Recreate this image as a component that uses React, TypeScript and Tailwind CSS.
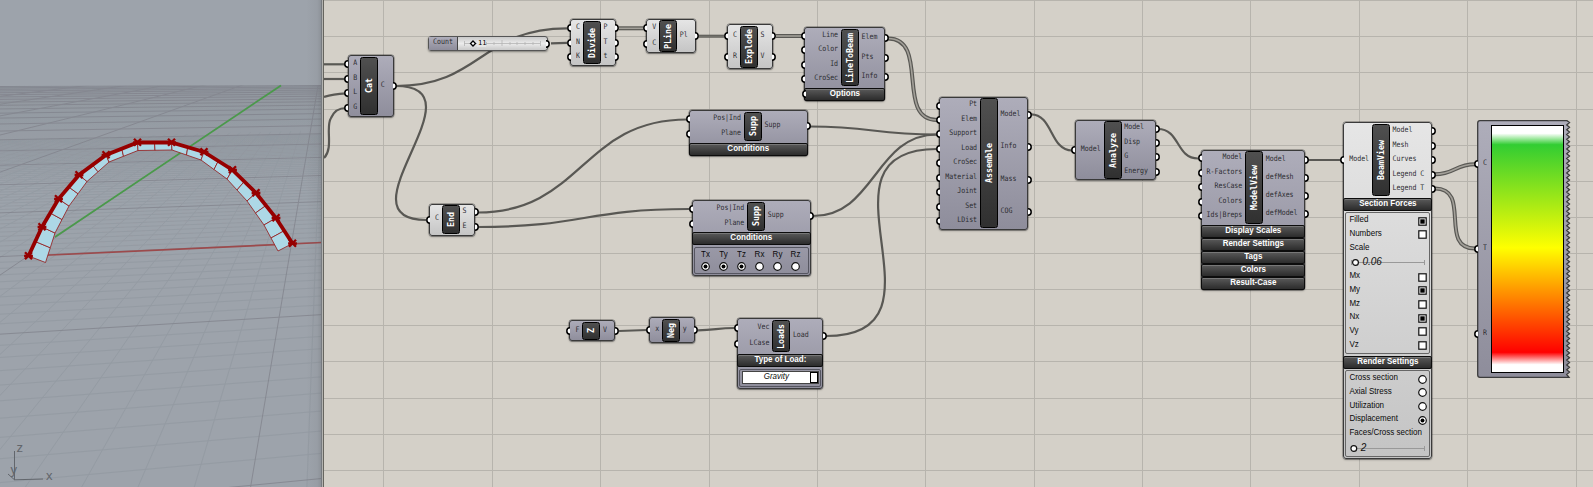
import React from "react";

const ORIGIN = 324;

type Tone = "gray" | "purple";

const toneClass: Record<Tone, string> = {
  gray: "bg-linear-to-b from-[#e6e6e6] to-[#c4c4c4]",
  purple: "bg-linear-to-b from-[#aeadba] to-[#8e8d9b]",
};

function Port({ side }: { side: "left" | "right" }) {
  return side === "left" ? (
    <svg width="4" height="9" viewBox="0 0 4 9" className="absolute top-1/2 -left-[3.4px] -translate-y-1/2">
      <path d="M4,1.3A3.1,3.1 0 0 0 4,7.7" fill="#fff" stroke="#000" strokeWidth="1.5" />
    </svg>
  ) : (
    <svg width="4" height="9" viewBox="0 0 4 9" className="absolute top-1/2 -right-[3.4px] -translate-y-1/2">
      <path d="M0,1.3A3.1,3.1 0 0 1 0,7.7" fill="#fff" stroke="#000" strokeWidth="1.5" />
    </svg>
  );
}

interface NodeProps {
  name: string;
  x: number;
  y: number;
  w: number;
  body: number;
  left: number;
  inputs: string[];
  outputs: string[];
  tone?: Tone;
  children?: React.ReactNode;
}

function Node({ name, x, y, w, body, left, inputs, outputs, tone = "purple", children }: NodeProps) {
  return (
    <div
      className={`absolute rounded-[3px] shadow-[0_0_0_0.4px_rgba(0,0,0,0.5),0_1px_2px_rgba(0,0,0,0.3)] outline-[1px] -outline-offset-1 outline-[#3a3a3a] ${toneClass[tone]}`}
      style={{ left: x - ORIGIN, top: y, width: w }}
    >
      <div className="flex" style={{ height: body }}>
        <div className="relative flex flex-col py-[1.5px]" style={{ width: left }}>
          {inputs.map((t) => (
            <div key={t} className="relative flex flex-1 items-center justify-end pr-[3px]">
              <Port side="left" />
              <Label>{t}</Label>
            </div>
          ))}
        </div>
        <div className="my-[1.5px] flex w-[18px] items-center justify-center rounded-[2.5px] border border-black bg-linear-to-b from-[#505050] to-[#303030]">
          <span className="scale-x-[1.15] rotate-180 whitespace-nowrap font-['DejaVu_Sans_Mono',monospace] text-[8.3px] leading-none font-bold text-white [writing-mode:vertical-rl]">
            {name}
          </span>
        </div>
        <div className="flex flex-1 flex-col py-[1.5px]">
          {outputs.map((t) => (
            <div key={t} className="relative flex flex-1 items-center pl-[2.5px]">
              <Port side="right" />
              <Label>{t}</Label>
            </div>
          ))}
        </div>
      </div>
      {children}
    </div>
  );
}

function Label({ children }: { children: React.ReactNode }) {
  return (
    <span className="mb-[1.5px] scale-y-[1.15] whitespace-pre font-['DejaVu_Sans_Mono',monospace] text-[6.6px] leading-none text-[#2c2c30]">
      {children}
    </span>
  );
}

function Bar({ children, port }: { children: React.ReactNode; port?: boolean }) {
  return (
    <div className="relative flex h-[13px] items-center justify-center rounded-[2px] border border-[#0c0c0c] bg-linear-to-b from-[#5a5a5a] to-[#2c2c2c] shadow-[inset_0_1px_0_#777]">
      {port && <Port side="left" />}
      <span className="mb-[1px] scale-y-[1.08] font-['Liberation_Sans',Arial,sans-serif] text-[8px] leading-none font-bold whitespace-nowrap text-white">
        {children}
      </span>
    </div>
  );
}

function Radio({ on }: { on?: boolean }) {
  return (
    <svg width="9" height="9" viewBox="0 0 9 9" className="shrink-0">
      <circle cx="4.5" cy="4.5" r="3.8" fill="#fff" stroke="#111" strokeWidth="1.2" />
      {on && <circle cx="4.5" cy="4.5" r="2" fill="#000" />}
    </svg>
  );
}

function Check({ on }: { on?: boolean }) {
  return (
    <svg width="9" height="9" viewBox="0 0 9 9" className="shrink-0">
      <rect x="0.8" y="0.8" width="7.4" height="7.4" fill="#fff" stroke="#111" strokeWidth="1.2" />
      {on && <rect x="2.3" y="2.3" width="4.4" height="4.4" fill="#000" />}
    </svg>
  );
}

function Option({ label, children }: { label: string; children?: React.ReactNode }) {
  return (
    <div className="flex h-[13.7px] items-center justify-between">
      <span className="scale-y-110 font-['Liberation_Sans',Arial,sans-serif] text-[8px] leading-none whitespace-nowrap text-[#0a0a0a]">{label}</span>
      <span className="mt-[2px] flex">{children}</span>
    </div>
  );
}

function ValueSlider({ value, knob }: { value: string; knob: number }) {
  return (
    <div className="relative h-[15px]">
      <svg width="80" height="15" viewBox="0 0 80 15" className="absolute top-0 left-0">
        <path d="M2,8.5H75M2.5,6V11M75.5,6V11" fill="none" stroke="#999" strokeWidth="1" />
        <circle cx={knob} cy="8.5" r="2.9" fill="#fff" stroke="#111" strokeWidth="1.2" />
      </svg>
      <span
        className="absolute top-[3px] font-['Liberation_Sans',Arial,sans-serif] text-[10px] leading-none text-[#111] italic"
        style={{ left: knob + 6.5 }}
      >
        {value}
      </span>
    </div>
  );
}

type WireKind = "single" | "double" | "tight";

function Wire({ d, kind = "single" }: { d: string; kind?: WireKind }) {
  if (kind === "single") return <path d={d} fill="none" stroke="#595854" strokeWidth="2.2" />;
  return (
    <g fill="none">
      <path d={d} stroke="#595854" strokeWidth={kind === "double" ? 4 : 3} />
      <path d={d} stroke="#a3a099" strokeWidth={kind === "double" ? 1.6 : 0.5} />
    </g>
  );
}

const wires: [string, WireKind?][] = [
  ["M324,64.3H346"],
  ["M324,79H346"],
  ["M324,97Q333,94 346,93.3"],
  ["M324,158C334,148 325,127 331,118C334,111 340,108 346,108"],
  ["M396,86C481,86 481,28.3 567,28.3"],
  ["M396,86C486,86 336,220 426,220"],
  ["M551,43.3L567,42.8"],
  ["M478,212.5C582,212.5 582,119.5 687,119.5"],
  ["M478,227C584,227 584,209 689,209"],
  ["M619,28.3H643", "double"],
  ["M699,36.2H724", "tight"],
  ["M776,36H802", "double"],
  ["M888,38.5C930,38.5 895,120 937,120", "double"],
  ["M810,126.5C873,126.5 873,134.5 937,134.5"],
  ["M813,216C875,216 875,134.5 937,134.5"],
  ["M826,336C961,336 802,149 937,149"],
  ["M1031,114.3C1053,114.3 1050,150.5 1072,150.5"],
  ["M1158,129C1180,129 1176,158.5 1198,158.5"],
  ["M1308,160H1341"],
  ["M1435,174.3C1455,174.3 1455,164.3 1475,164.3", "double"],
  ["M1435,188.5C1472,188.5 1438,248.5 1475,248.5", "double"],
  ["M619,331L647,330"],
  ["M698,330.3C716,330.3 716,328 735,328"],
];

const topChord = [
  [28.5, 256], [42, 227], [58.5, 199], [79, 175], [106, 155], [137.5, 142.5],
  [171.5, 142.5], [204, 152], [232.5, 170], [256, 193], [276, 218], [292.5, 243.5],
];
const bottomChord = [
  [45.5, 262.5], [55, 233], [69, 206], [87, 181.5], [109, 162], [138, 150.5],
  [172, 150], [201, 160], [227, 179], [247, 201], [264, 225], [278, 251],
];

function mid(a: number[], b: number[]) {
  return [(a[0] + b[0]) / 2, (a[1] + b[1]) / 2];
}

function GroundGrid() {
  const major: React.ReactNode[] = [];
  const minor: React.ReactNode[] = [];
  for (let i = -200; i <= 4; i++) {
    const x = 250.6 + 56.3 * i;
    if (i % 10 === 0) {
      if (i > -70) major.push(<line key={`v${i}`} x1="323" y1="56" x2={x} y2="487" />);
    } else if (i > -50) {
      minor.push(<line key={`v${i}`} x1="323" y1="56" x2={x} y2="487" />);
    }
  }
  for (let j = -20; j <= 200; j++) {
    const a = 56 + 1 / (0.004985 + 0.000139 * j);
    const b = 56 + 1 / (0.005367 + 0.00015 * j);
    if (j % 10 === 0) {
      major.push(<line key={`h${j}`} x1="0" y1={a} x2="322" y2={b} />);
    } else if (j < 50) {
      minor.push(<line key={`h${j}`} x1="0" y1={a} x2="322" y2={b} />);
    }
  }
  return (
    <>
      <polygon points="0,86 324,85 324,190 0,190" fill="url(#haze)" />
      <g clipPath="url(#near)" stroke="#8b939b" strokeWidth="0.9" opacity="0.5">{minor}</g>
      <g clipPath="url(#ground)" stroke="#80828b" strokeWidth="1" opacity="0.75">{major}</g>
    </>
  );
}

function Viewport() {
  return (
    <section className="h-full w-[324px] shrink-0 bg-[#9da3ab]">
      <svg width="324" height="487" viewBox="0 0 324 487">
        <defs>
          <clipPath id="ground">
            <polygon points="0,86 324,85 324,487 0,487" />
          </clipPath>
          <clipPath id="near">
            <polygon points="0,140 324,130 324,487 0,487" />
          </clipPath>
          <linearGradient id="haze" x1="0" x2="0" y1="0" y2="1">
            <stop offset="0" stopColor="#858c93" stopOpacity="0.5" />
            <stop offset="1" stopColor="#858c93" stopOpacity="0" />
          </linearGradient>
          <linearGradient id="edge" x1="0" x2="1" y1="0" y2="0">
            <stop offset="0" stopColor="#444" stopOpacity="0" />
            <stop offset="0.7" stopColor="#444" stopOpacity="0.06" />
            <stop offset="1" stopColor="#444" stopOpacity="0.2" />
          </linearGradient>
        </defs>
        <GroundGrid />
        <line x1="28" y1="256" x2="322" y2="242.5" stroke="#9c4a4c" strokeWidth="1.7" />
        <line x1="55" y1="237" x2="281" y2="85.5" stroke="#4a9a4a" strokeWidth="1.7" />
        <g fill="#add8e6" stroke="#961818" strokeWidth="0.8">
          {topChord.slice(0, -1).map((p, i) => {
            const q = topChord[i + 1];
            const r = bottomChord[i + 1];
            const s = bottomChord[i];
            const m = mid(p, q);
            const n = mid(s, r);
            return (
              <g key={i}>
                <polygon points={`${p} ${m} ${n} ${s}`} />
                <polygon points={`${m} ${q} ${r} ${n}`} />
              </g>
            );
          })}
        </g>
        <polyline points={topChord.map((p) => p.join(",")).join(" ")} fill="none" stroke="#960000" strokeWidth="3.8" />
        {topChord.map(([x, y], i) => (
          <path key={i} d={`M${x - 3.5},${y - 3.8}l7,7m0,-7l-7,7M${x - 4.4},${y}h8.8`} stroke="#960000" strokeWidth="2.3" />
        ))}
        <path d="M14.5,451V480M8,474L14.5,479.8L43,479" fill="none" stroke="#62666c" strokeWidth="1" />
        <g className="font-['Liberation_Sans',Arial,sans-serif] text-[13px]" fill="#62666c">
          <text x="16.5" y="451.5">z</text>
          <text x="10.5" y="473.5">y</text>
          <text x="46" y="479.5">x</text>
        </g>
        <rect x="306" y="0" width="16" height="487" fill="url(#edge)" />
        <rect x="321" y="0" width="1" height="487" fill="#777b80" />
        <rect x="322" y="0" width="1" height="487" fill="#b3b3b0" />
        <rect x="323" y="0" width="1" height="487" fill="#66655f" />
      </svg>
    </section>
  );
}

const gridX = [383.5, 492.5, 600.5, 709.5, 817.5, 925.5, 1034.5, 1142.5, 1250.5, 1359.5, 1467.5, 1576.5];
const gridY = [0.5, 36.5, 72.5, 109.5, 145.5, 181.5, 217.5, 253.5, 289.5, 325.5, 361.5, 398.5, 434.5, 470.5];

function CountSlider() {
  return (
    <div className="absolute top-[36px] left-[104px] flex h-[15px] w-[120px] rounded-[3px] border border-[#555] bg-linear-to-b from-[#c9c9c9] via-[#ececec] to-[#c9c9c9] shadow-[0_1px_2px_rgba(0,0,0,0.4)]">
      <div className="flex w-[29px] items-center justify-center border-r border-[#444] bg-linear-to-b from-[#aeadba] to-[#8e8d9b]">
        <Label>Count</Label>
      </div>
      <svg width="89" height="13" viewBox="0 0 89 13">
        <path d="M6,6.5H82M6.5,4V9M28.5,5V8M36,5V8M44,3V9M52,5V8M59,5V8M67,5V8M75,5V8M82.5,4V9" fill="none" stroke="#b4b4b4" strokeWidth="0.8" />
        <path d="M15,4L17.5,6.5L15,9L12.5,6.5Z" fill="#fff" stroke="#000" strokeWidth="1.3" />
        <rect x="19" y="3" width="9" height="7" fill="#e6e6e6" />
        <text x="20" y="8" fontSize="7" className="font-['DejaVu_Sans_Mono',monospace]">11</text>
      </svg>
      <Port side="right" />
    </div>
  );
}

function Legend() {
  let d = "M3,0.7H90";
  for (let y = 2.5; y < 256; y += 4.8) d += `L92.5,${y}L89.7,${Math.min(y + 2.4, 257)}`;
  d += "L92,257.3H3Q0.7,257.3 0.7,255V3Q0.7,0.7 3,0.7Z";
  return (
    <div className="absolute top-[120px] left-[1153px] flex h-[258px] w-[94px]">
      <svg width="94" height="258" viewBox="0 0 94 258" className="absolute top-0 left-0">
        <defs>
          <linearGradient id="panel" x1="0" x2="0" y1="0" y2="1">
            <stop offset="0" stopColor="#aeadba" />
            <stop offset="1" stopColor="#8e8d9b" />
          </linearGradient>
        </defs>
        <path d={d} fill="url(#panel)" stroke="#3c3c3c" strokeWidth="1.3" />
      </svg>
      <div className="relative flex w-[14px] flex-col py-[2px]">
        {["C", "T", "R"].map((t) => (
          <div key={t} className="relative flex flex-1 items-center pl-[6px]">
            <Port side="left" />
            <Label>{t}</Label>
          </div>
        ))}
      </div>
      <div className="relative my-[5px] w-[73px] border border-black bg-[linear-gradient(to_bottom,#fff_3%,#32cd32_7.6%,#ff0_49.5%,#f00_92%,#fff_97%)]" />
    </div>
  );
}

export default function App() {
  return (
    <main className="flex h-[487px] w-[1593px] overflow-hidden">
      <Viewport />
      <section className="relative h-full flex-1 overflow-hidden bg-[#d4d0c8]">
        <svg width="1269" height="487" viewBox="324 0 1269 487" className="absolute top-0 left-0">
          <g stroke="#b7b4ad" strokeWidth="1">
            {gridX.map((x) => <line key={x} x1={x} y1="0" x2={x} y2="487" />)}
            {gridY.map((y) => <line key={y} x1="324" y1={y} x2="1593" y2={y} />)}
          </g>
          {wires.map(([d, kind]) => <Wire key={d} d={d} kind={kind} />)}
        </svg>

        <Node name="Cat" x={347.7} y={55.3} w={46} body={61.4} left={12.5} inputs={["A", "B", "L", "G"]} outputs={["C"]} />
        <CountSlider />
        <Node name="End" x={429.3} y={203.5} w={46} body={32} left={12.7} tone="gray" inputs={["C"]} outputs={["S", "E"]} />
        <Node name="Divide" x={570.3} y={19.4} w={45.7} body={46.5} left={12.7} tone="gray" inputs={["C", "N", "K"]} outputs={["P", "T", "t"]} />
        <Node name="PLine" x={646.3} y={18.7} w={49.5} body={34.8} left={13} tone="gray" inputs={["V", "C"]} outputs={["Pl"]} />
        <Node name="Explode" x={727} y={24.4} w={46} body={45} left={13} tone="gray" inputs={["C", "R"]} outputs={["S", "V"]} />
        <Node name="LineToBeam" x={804.4} y={27.3} w={81} body={60.7} left={36.7} inputs={["Line", "Color", "Id", "CroSec"]} outputs={["Elem", "Pts", "Info"]}>
          <Bar port>Options</Bar>
        </Node>
        <Node name="Supp" x={689} y={110.4} w={118.5} body={32.2} left={55} inputs={["Pos|Ind", "Plane"]} outputs={["Supp"]}>
          <Bar>Conditions</Bar>
        </Node>
        <Node name="Supp" x={692} y={200.3} w={118.5} body={32} left={55.3} inputs={["Pos|Ind", "Plane"]} outputs={["Supp"]}>
          <Bar>Conditions</Bar>
          <div className="p-[2px] pb-[1.5px]">
            <div className="flex h-[27px] rounded-[2px] border border-[#555560] pt-[3px] pl-[1.5px]">
              {["Tx", "Ty", "Tz", "Rx", "Ry", "Rz"].map((t, i) => (
                <div key={t} className="flex w-[18px] flex-col items-center justify-between pb-[2px]">
                  <span className="scale-y-110 font-['Liberation_Sans',Arial,sans-serif] text-[8px] leading-none text-[#0a0a0a]">{t}</span>
                  <Radio on={i < 3} />
                </div>
              ))}
            </div>
          </div>
        </Node>
        <Node name="Z" x={569.4} y={320.4} w={46} body={21} left={13} inputs={["F"]} outputs={["V"]} />
        <Node name="Neg" x={649.3} y={317.4} w={45.5} body={26} left={13} inputs={["x"]} outputs={["y"]} />
        <Node name="Loads" x={737.4} y={318.4} w={86} body={35.5} left={35} inputs={["Vec", "LCase"]} outputs={["Load"]}>
          <Bar>Type of Load:</Bar>
          <div className="p-[2px]">
            <div className="rounded-[2px] border border-[#555560] p-[1.5px]">
              <div className="flex h-[13px] border border-[#444] bg-white">
                <span className="flex-1 scale-y-110 pt-[1px] text-center font-['Liberation_Sans',Arial,sans-serif] text-[8px] leading-none text-[#0a0a0a] italic">Gravity</span>
                <span className="w-[8px] border border-black bg-white" />
              </div>
            </div>
          </div>
        </Node>
        <Node
          name="Assemble" x={939.4} y={96.8} w={89} body={133.2} left={40.7}
          inputs={["Pt", "Elem", "Support", "Load", "CroSec", "Material", "Joint", "Set", "LDist"]}
          outputs={["Model", "Info", "Mass", "COG"]}
        />
        <Node name="Analyze" x={1074.7} y={119.8} w={81.5} body={60.6} left={29} inputs={["Model"]} outputs={["Model", "Disp", "G", "Energy"]} />
        <Node
          name="ModelView" x={1201.3} y={149.5} w={104} body={75.5} left={44}
          inputs={["Model", "R-Factors", "ResCase", "Colors", "Ids|Breps"]}
          outputs={["Model", "defMesh", "defAxes", "defModel"]}
        >
          <Bar>Display Scales</Bar>
          <Bar>Render Settings</Bar>
          <Bar>Tags</Bar>
          <Bar>Colors</Bar>
          <Bar>Result-Case</Bar>
        </Node>
        <Node
          name="BeamView" x={1343.4} y={122.4} w={89} body={75.4} left={28.7} tone="gray"
          inputs={["Model"]} outputs={["Model", "Mesh", "Curves", "Legend C", "Legend T"]}
        >
          <Bar>Section Forces</Bar>
          <div className="px-[2px] py-[1.5px]">
            <div className="h-[142px] rounded-[2px] border border-[#666] pr-[2px] pl-[3px]">
              <Option label="Filled"><Check on /></Option>
              <Option label="Numbers"><Check /></Option>
              <Option label="Scale" />
              <ValueSlider value="0.06" knob={6.5} />
              <Option label="Mx"><Check /></Option>
              <Option label="My"><Check on /></Option>
              <Option label="Mz"><Check /></Option>
              <Option label="Nx"><Check on /></Option>
              <Option label="Vy"><Check /></Option>
              <Option label="Vz"><Check /></Option>
            </div>
          </div>
          <Bar>Render Settings</Bar>
          <div className="px-[2px] pt-[1.5px] pb-[2px]">
            <div className="h-[87px] rounded-[2px] border border-[#666] pr-[2px] pl-[3px]">
              <Option label="Cross section"><Radio /></Option>
              <Option label="Axial Stress"><Radio /></Option>
              <Option label="Utilization"><Radio /></Option>
              <Option label="Displacement"><Radio on /></Option>
              <Option label="Faces/Cross section" />
              <ValueSlider value="2" knob={4.8} />
            </div>
          </div>
        </Node>
        <Legend />
      </section>
    </main>
  );
}
